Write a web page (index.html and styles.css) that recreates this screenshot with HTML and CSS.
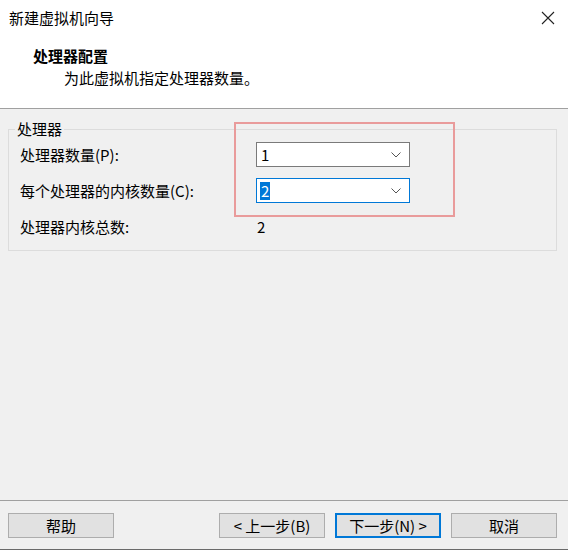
FILE: index.html
```html
<!DOCTYPE html>
<html lang="zh-CN">
<head>
<meta charset="utf-8">
<title>新建虚拟机向导</title>
<link rel="stylesheet" href="styles.css">
</head>
<body>
<div class="window">
  <header class="header">
    <div class="titlebar">
      <span class="title">新建虚拟机向导</span>
      <svg class="close" width="16" height="16" viewBox="0 0 16 16"><path d="M2 2 L14 14 M14 2 L2 14" stroke="#222" stroke-width="1.1" fill="none"/></svg>
    </div>
    <div class="heading">处理器配置</div>
    <div class="subheading">为此虚拟机指定处理器数量。</div>
  </header>
  <main class="content">
    <fieldset class="group">
      <legend class="legend">处理器</legend>
      <div class="grid">
        <div class="label">处理器数量(P):</div>
        <div class="combo"><span class="value">1</span><svg class="chev" width="10" height="6" viewBox="0 0 10 6"><path d="M0.5 0.5 L5 5 L9.5 0.5" stroke="#555" stroke-width="1" fill="none"/></svg></div>
        <div class="label">每个处理器的内核数量(C):</div>
        <div class="combo focused"><span class="value selected">2</span><svg class="chev" width="10" height="6" viewBox="0 0 10 6"><path d="M0.5 0.5 L5 5 L9.5 0.5" stroke="#555" stroke-width="1" fill="none"/></svg></div>
        <div class="label">处理器内核总数:</div>
        <div class="total">2</div>
      </div>
    </fieldset>
    <div class="highlight"></div>
  </main>
  <footer class="footer">
    <button class="btn">帮助</button>
    <div class="nav">
      <button class="btn">&lt; 上一步(B)</button>
      <button class="btn default">下一步(N) &gt;</button>
      <button class="btn">取消</button>
    </div>
  </footer>
</div>
</body>
</html>
```

FILE: styles.css
```css
* { box-sizing: border-box; }
html, body { margin: 0; padding: 0; }
body {
  width: 568px;
  height: 550px;
  font-family: "Noto Sans CJK SC", "Noto Sans", sans-serif;
  font-size: 15px;
  color: #000;
  background: #f0f0f0;
  overflow: hidden;
}
.window {
  display: flex;
  flex-direction: column;
  height: 550px;
  border-bottom: 1px solid #6a6a6a;
}
.header {
  background: #fff;
  height: 109px;
  border-bottom: 1px solid #a0a0a0;
}
.titlebar {
  display: flex;
  justify-content: space-between;
  align-items: center;
  height: 28px;
  padding: 8px 12px 0 9px;
}
.title { line-height: 20px; }
.heading {
  font-weight: bold;
  line-height: 20px;
  margin: 18px 0 0 33px;
}
.subheading {
  line-height: 20px;
  margin: 2px 0 0 64px;
}
.content {
  position: relative;
  flex: 1;
  padding-top: 12px;
}
.group {
  margin: 0 11px 0 8px;
  padding: 5px 11px 11px 11px;
  border: 1px solid #dcdcdc;
  min-width: 0;
}
.legend {
  padding: 0 2px;
  margin-left: -5px;
  line-height: 16px;
}
.grid {
  display: grid;
  grid-template-columns: 236px 154px;
  grid-auto-rows: 25px;
  row-gap: 11px;
  align-items: center;
}
.label, .total { line-height: 20px; }
.total { padding-left: 1px; }
.combo {
  display: flex;
  align-items: center;
  justify-content: space-between;
  height: 25px;
  background: #fff;
  border: 1px solid #7a7a7a;
  padding: 0 8px 0 4px;
}
.combo.focused { border-color: #0078d7; }
.value { line-height: 18px; }
.selected {
  background: #0078d7;
  color: #fff;
  padding: 0 1px;
  margin-left: -1px;
}
.chev { margin-top: 1px; }
.highlight {
  position: absolute;
  left: 234px;
  top: 13px;
  width: 221px;
  height: 95px;
  border: 2px solid #e99b9b;
  pointer-events: none;
}
.footer {
  display: flex;
  justify-content: space-between;
  align-items: flex-start;
  height: 49px;
  padding: 12px 11px 0 8px;
  border-top: 1px solid #a0a0a0;
}
.nav { display: flex; gap: 10px; }
.btn {
  width: 106px;
  height: 25px;
  font-family: inherit;
  font-size: 15px;
  line-height: 20px;
  color: #000;
  background: #e1e1e1;
  border: 1px solid #adadad;
  padding: 0;
}
.btn.default { border: 2px solid #0078d7; }
```
